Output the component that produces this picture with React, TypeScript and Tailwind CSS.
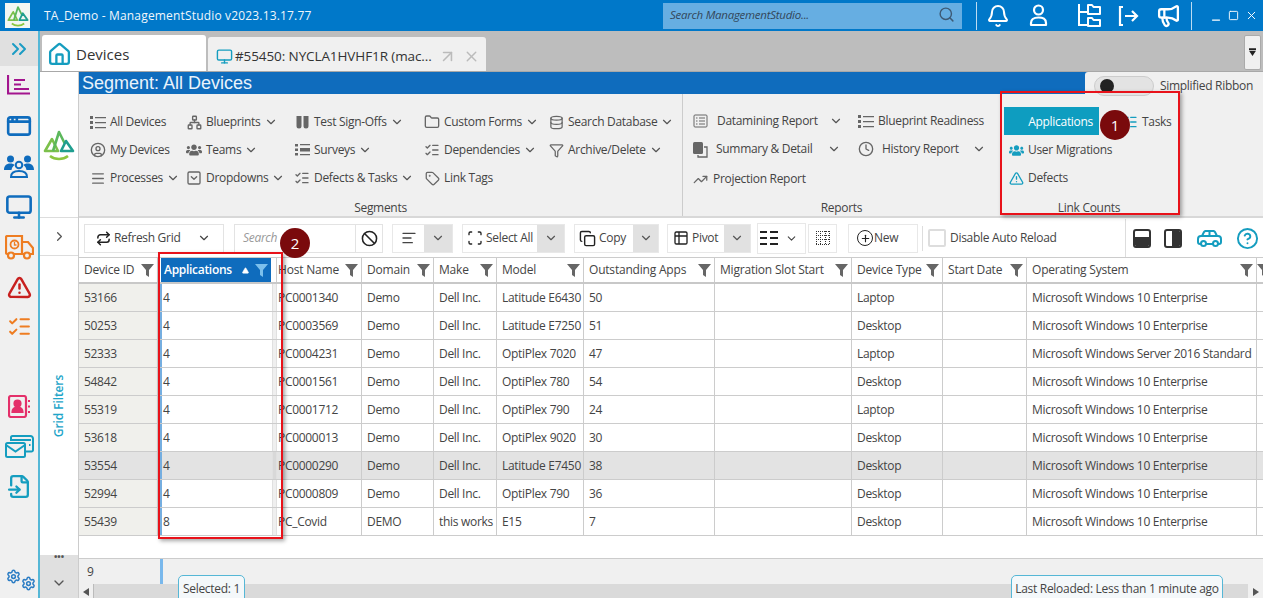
import React from "react";
import {
  Bell, Search, ChevronsRight, ChevronRight, ChevronDown, Home, Monitor, ArrowUpRight, X,
  CircleUser, Menu, Network, SquareChevronDown, ListChecks, Tag, Database, Funnel, Folder, Clock,
  TrendingUp, TriangleAlert, AppWindow, Repeat, Ban, AlignLeft, Scan, Copy, Table2, Plus, CircleHelp, Minus, Square, FileInput, Settings, Megaphone, Triangle
} from "lucide-react";
import { FaUsers } from "react-icons/fa";

const font = "font-['Open_Sans','Noto_Sans',sans-serif]";

function DotList({ size = 16 }: { size?: number }) {
  return (
    <svg width={size} height={size} viewBox="0 0 16 16" fill="#666">
      <path d="M0 2h3v3H0zM5 3h11v1.300H5zM0 7h3v3H0zM5 8h11v1.300H5zM0 12h3v3H0zM5 13h11v1.300H5z" />
    </svg>
  );
}
function Tubes() {
  return (
    <svg width="15" height="15" viewBox="0 0 15 15" fill="#666">
      <path d="M1.500 1h5v10a2.500 2.500 0 0 1-5 0zM8.500 1h5v10a2.500 2.500 0 0 1-5 0z" />
    </svg>
  );
}
function Survey() {
  return (
    <svg width="15" height="14" viewBox="0 0 15 14" fill="#666">
      <path d="M0 1h3v2.500H0zM5 1h10v1.200H5zM0 5.500h3V8H0zM5 5h10v3.500H5zM0 10h3v2.500H0zM5 11h10v1.200H5z" />
    </svg>
  );
}
function Datamining() {
  return (
    <svg width="15" height="14" viewBox="0 0 15 14" fill="none" stroke="#666">
      <rect x="1" y="1" width="13" height="12" rx="1" />
      <path d="M3 4h1.500M6 4h6M3 7h1.500M6 7h6M3 10h1.500M6 10h6" />
    </svg>
  );
}
function Summary() {
  return (
    <svg width="16" height="17" viewBox="0 0 16 17">
      <rect x="1" y="1" width="10" height="12" rx="1.500" fill="#666" />
      <path d="M12 6h3v10H6v-2" fill="none" stroke="#666" strokeWidth="1.300" />
    </svg>
  );
}

function Item({ icon, label, caret, gap = 4, caretGap = 3, className = "" }: { icon: React.ReactNode; label: string; caret?: boolean; gap?: number; caretGap?: number; className?: string }) {
  return (
    <div className={`flex h-[28px] items-center whitespace-nowrap text-[12px] tracking-[-0.3px] text-[#444] ${className}`}>
      <span className="flex w-[16px] shrink-0 justify-center text-[#666]" style={{ marginRight: gap }}>{icon}</span>
      <span>{label}</span>
      {caret && <span style={{ marginLeft: caretGap }}><ChevronDown size={14} className="text-[#555]" /></span>}
    </div>
  );
}

function HeadFilter({ white }: { white?: boolean }) {
  return (
    <svg width="13" height="14" viewBox="0 0 13 14" className="shrink-0">
      <path d="M0 1h13L8 7v7L5 12V7z" fill={white ? "#7cc0ec" : "#666"} />
    </svg>
  );
}

function RailIcon({ children, className = "" }: { children: React.ReactNode; className?: string }) {
  return <div className={`flex h-[40px] items-center justify-center ${className}`}>{children}</div>;
}

const cols = ["Device ID", "Applications", "Host Name", "Domain", "Make", "Model", "Outstanding Apps", "Migration Slot Start", "Device Type", "Start Date", "Operating System"];
const W10 = "Microsoft Windows 10 Enterprise";
const rows = [
  ["53166", "4", "PC0001340", "Demo", "Dell Inc.", "Latitude E6430", "50", "", "Laptop", "", W10],
  ["50253", "4", "PC0003569", "Demo", "Dell Inc.", "Latitude E7250", "51", "", "Desktop", "", W10],
  ["52333", "4", "PC0004231", "Demo", "Dell Inc.", "OptiPlex 7020", "47", "", "Laptop", "", "Microsoft Windows Server 2016 Standard"],
  ["54842", "4", "PC0001561", "Demo", "Dell Inc.", "OptiPlex 780", "54", "", "Desktop", "", W10],
  ["55319", "4", "PC0001712", "Demo", "Dell Inc.", "OptiPlex 790", "24", "", "Laptop", "", W10],
  ["53618", "4", "PC0000013", "Demo", "Dell Inc.", "OptiPlex 9020", "30", "", "Desktop", "", W10],
  ["53554", "4", "PC0000290", "Demo", "Dell Inc.", "Latitude E7450", "38", "", "Desktop", "", W10],
  ["52994", "4", "PC0000809", "Demo", "Dell Inc.", "OptiPlex 790", "36", "", "Desktop", "", W10],
  ["55439", "8", "PC_Covid", "DEMO", "this works", "E15", "7", "", "Desktop", "", W10],
];
const gridCols = "grid grid-cols-[79px_119px_85px_72px_63px_87px_131px_137px_91px_84px_230px_6px]";

function Logo({ size }: { size: number }) {
  return (
    <svg width={size} height={size} viewBox="0 0 32 32" fill="none" strokeLinejoin="round">
      <path d="M2 22 9 10l6 12z" stroke="#7cc04b" strokeWidth="2.600" />
      <path d="M10 22 16 3l6 12" stroke="#5cb85c" strokeWidth="2.600" />
      <path d="M18 22l5-10 7 10z" stroke="#1f9e8f" strokeWidth="2.600" />
      <path d="M7 27c5 4 13 4 18 0" stroke="#8cc63f" strokeWidth="2.600" />
    </svg>
  );
}

function Toggle({ className }: { className: string }) {
  return (
    <div className={`flex items-center justify-center bg-[#e1e1e1] ${className}`}>
      <ChevronDown size={14} className="text-[#555]" />
    </div>
  );
}

export default function App() {
  return (
    <div className={`relative flex h-[598px] w-[1263px] flex-col overflow-hidden bg-white ${font}`}>
      {/* title bar */}
      <div className="flex h-[31px] shrink-0 items-center bg-[#0078c9] text-white">
        <div className="ml-[5px] flex h-[25px] w-[25px] items-center justify-center bg-[#f3f7f3]"><Logo size={22} /></div>
        <span className="ml-[14px] w-[268px] whitespace-nowrap text-[12px] tracking-[0.17px] text-[#f0f6fb]">TA_Demo - ManagementStudio v2023.13.17.77</span>
        <div className="ml-[351px] flex h-[26px] w-[299px] items-center justify-between bg-[#66aee2] px-[7px] pb-[2px]">
          <span className="text-[11.5px] italic tracking-[-0.25px] text-[#33475a]">Search ManagementStudio...</span>
          <Search size={17} className="text-[#3d5a75]" />
        </div>
        <div className="ml-[14px] h-[28px] w-px bg-[#bcdcf2]" />
        <Bell size={24} className="ml-[9px]" strokeWidth={2} />
        <svg width="25" height="25" viewBox="0 0 25 25" fill="none" stroke="white" strokeWidth="2.200" className="ml-[16px]">
          <circle cx="12.500" cy="7" r="4.500" />
          <path d="M5 22v-2c0-4 3-5.500 7.500-5.500S20 16 20 20v2z" strokeLinejoin="round" />
        </svg>
        <svg width="25" height="25" viewBox="0 0 25 25" fill="none" stroke="white" strokeWidth="2" className="ml-[25px]">
          <path d="M3 1v21h8M3 9h8" />
          <path d="M12 2h4l1.500 2H24v7H12zM12 15h4l1.500 2H24v6H12z" strokeLinejoin="round" />
        </svg>
        <svg width="24" height="24" viewBox="0 0 24 24" fill="none" stroke="white" strokeWidth="2.200" className="ml-[15px]">
          <path d="M7 3H4v18h3M9 12h12M16 7l5 5-5 5" />
        </svg>
        <Megaphone size={25} className="ml-[16px]" strokeWidth={2.2} />
        <div className="ml-[10px] h-[28px] w-px bg-[#bcdcf2]" />
        <Minus size={12} className="ml-[18px] mt-[8px]" strokeWidth={2.5} />
        <Square size={11} className="ml-[6px]" strokeWidth={2} />
        <X size={13} className="ml-[6px]" strokeWidth={1.8} />
      </div>

      <div className="flex min-h-0 flex-1">
        {/* left rail */}
        <div className="flex w-[40px] shrink-0 flex-col border-r-2 border-[#55b7d6] bg-[#f0f0f0]">
          <div className="flex h-[35px] items-center justify-center bg-[#e0e0e0] text-[#1c9cc4]"><ChevronsRight size={24} strokeWidth={2} /></div>
          <RailIcon className="-mt-[1px]">
            <svg width="24" height="20" viewBox="0 0 24 20" fill="none" stroke="#a3158e" strokeWidth="2.200"><path d="M1 0v18.500h22M7 5h11M7 9.500h7M7 14h15" /></svg>
          </RailIcon>
          <RailIcon className="mt-[1px]"><AppWindow size={26} className="text-[#0f6cbd]" strokeWidth={2.4} /></RailIcon>
          <RailIcon>
            <svg width="30" height="24" viewBox="0 0 30 24" fill="#0f6cbd">
              <circle cx="6.500" cy="5" r="3.500" /><circle cx="23.500" cy="5" r="3.500" />
              <path d="M0 16c0-4 2-6.500 6.500-6.500 2 0 3 .5 4 1.500-2 1.500-2.500 3-3 5zM30 16c0-4-2-6.500-6.500-6.500-2 0-3 .5-4 1.500 2 1.500 2.500 3 3 5z" />
              <circle cx="15" cy="11" r="3.300" fill="none" stroke="#0f6cbd" strokeWidth="2" />
              <path d="M7 23c0-4 3-6 8-6s8 2 8 6z" fill="none" stroke="#0f6cbd" strokeWidth="2" />
            </svg>
          </RailIcon>
          <RailIcon className="mt-[1px]"><Monitor size={28} className="text-[#0f6cbd]" strokeWidth={2.2} /></RailIcon>
          <RailIcon>
            <svg width="29" height="25" viewBox="0 0 29 25" fill="none" stroke="#ee7d22" strokeWidth="2.200">
              <path d="M3 19H2.500A1.500 1.500 0 0 1 1 17.500V2.500A1.500 1.500 0 0 1 2.500 1H17v18H9" />
              <path d="M17 7h6l5 6v6h-3M17 19h2" />
              <circle cx="9.500" cy="9.500" r="4" strokeWidth="1.800" />
              <path d="M9.500 7v3h2" strokeWidth="1.300" />
              <circle cx="6" cy="20.500" r="3" /><circle cx="22" cy="20.500" r="3" />
            </svg>
          </RailIcon>
          <RailIcon><TriangleAlert size={25} className="text-[#c8201f]" strokeWidth={2.4} /></RailIcon>
          <RailIcon className="-mt-[1px]"><ListChecks size={25} className="text-[#ee7d22]" strokeWidth={2} /></RailIcon>
          <RailIcon className="mt-[40px]">
            <svg width="23" height="23" viewBox="0 0 23 23" fill="none" stroke="#e4306a" strokeWidth="2.200">
              <rect x="1" y="1" width="17" height="21" rx="2" />
              <circle cx="9.500" cy="8.500" r="3" fill="#e4306a" />
              <path d="M4.500 17c0-3 2-4.500 5-4.500s5 1.500 5 4.500z" fill="#e4306a" />
              <path d="M21 5v2M21 10.500v2M21 16v2" strokeWidth="2" />
            </svg>
          </RailIcon>
          <RailIcon>
            <svg width="29" height="23" viewBox="0 0 29 23" fill="none" stroke="#159dbf" strokeWidth="2">
              <path d="M6 6V2.500A1.500 1.500 0 0 1 7.500 1h18A2.500 2.500 0 0 1 28 3.500V15a1.500 1.500 0 0 1-1.500 1.500H21" />
              <path d="M7 5h19" />
              <rect x="1" y="8" width="19" height="14" rx="1.500" />
              <path d="M1 10l9.500 6.500L20 10" />
              <path d="M24 10h1.500" />
            </svg>
          </RailIcon>
          <RailIcon><FileInput size={25} className="text-[#159dbf]" strokeWidth={2.2} /></RailIcon>
          <div className="mt-auto mb-[2px] ml-[4px] flex h-[34px] items-center justify-center gap-0 text-[#2c7dc4]">
            <Settings size={15} className="-mt-[6px]" strokeWidth={2.4} />
            <Settings size={15} className="mt-[9px]" strokeWidth={2.4} />
          </div>
        </div>

        {/* main */}
        <div className="flex min-w-0 flex-1 flex-col">
          {/* tabs */}
          <div className="relative flex h-[41px] shrink-0 items-end border-b border-[#a8a8a8] bg-[#bdbdbd] pl-[2px]">
            <div className="flex h-[36px] w-[164px] items-center rounded-t-[3px] bg-white pt-[2px] pl-[5px]">
              <Home size={25} className="text-[#159dbf]" strokeWidth={2.2} />
              <span className="ml-[4px] text-[15px] text-[#333]">Devices</span>
            </div>
            <div className="ml-[2px] flex h-[34px] w-[278px] items-center rounded-t-[3px] bg-[#f0f0f0] pl-[8px] pt-[4px] text-[#333]">
              <Monitor size={17} className="text-[#159dbf]" strokeWidth={2} />
              <span className="ml-[2px] text-[13.5px] tracking-[-0.1px]">#55450: NYCLA1HVHF1R (mac...</span>
              <ArrowUpRight size={19} className="ml-[6px] text-[#bbb]" />
              <X size={17} className="ml-[6px] text-[#bbb]" />
            </div>
            <div className="absolute right-[2px] top-[4px] flex h-[35px] w-[17px] items-center justify-center rounded-[2px] border border-[#aaa] bg-[#f0f0f0]">
              <svg width="7" height="9" viewBox="0 0 8 10"><path d="M0 0h8v2H0zM0 3h8L4 9z" fill="#222" /></svg>
            </div>
          </div>

          <div className="flex min-h-0 flex-1">
            {/* side column */}
            <div className="flex w-[38px] shrink-0 flex-col">
              <div className="flex h-[146px] items-center justify-center border-b border-[#ddd] bg-white"><Logo size={32} /></div>
              <div className="flex h-[38px] items-center justify-center border-b border-[#ddd] bg-white text-[#555]"><ChevronRight size={15} /></div>
              <div className="flex h-[299px] items-center justify-center bg-white">
                <span className="-rotate-90 whitespace-nowrap text-[12px] font-semibold tracking-[-0.1px] text-[#1ea5c9]">Grid Filters</span>
              </div>
              <div className="flex h-[43px] flex-col items-center bg-[#e0e0e0] text-[#555]">
                <span className="h-[5px] text-[9px] font-bold leading-[3px] tracking-[0px]">•••</span>
                <ChevronDown size={16} className="mt-[15px]" />
              </div>
            </div>

            <div className="flex min-w-0 flex-1 flex-col border-l border-[#ccc]">
              {/* segment bar */}
              <div className="h-[22px] shrink-0 bg-[#0f6cbd] pl-[3px] font-['Liberation_Sans',sans-serif] text-[18px] leading-[22px] text-[#e9f3fb]">Segment: All Devices</div>

              {/* ribbon */}
              <div className="flex h-[124px] shrink-0 border-b-2 border-[#d8d8d8] bg-[#f0f0f0]">
                <div className="flex w-[604px] shrink-0 flex-col border-r border-[#ccc]">
                  <div className="flex flex-1 pl-[11px] pt-[14px]">
                    <div className="w-[96px]">
                      <Item icon={<DotList />} label="All Devices" />
                      <Item icon={<CircleUser size={16} />} label="My Devices" />
                      <Item icon={<Menu size={17} />} label="Processes" caret />
                    </div>
                    <div className="w-[108px]">
                      <Item icon={<Network size={15} strokeWidth={2.2} />} label="Blueprints" caret />
                      <Item icon={<FaUsers size={16} />} label="Teams" caret />
                      <Item icon={<SquareChevronDown size={16} />} label="Dropdowns" caret />
                    </div>
                    <div className="w-[130px]">
                      <Item icon={<Tubes />} label="Test Sign-Offs" caret />
                      <Item icon={<Survey />} label="Surveys" caret />
                      <Item icon={<ListChecks size={16} />} label="Defects & Tasks" caret />
                    </div>
                    <div className="w-[124px]">
                      <Item icon={<Folder size={16} />} label="Custom Forms" caret />
                      <Item icon={<ListChecks size={16} />} label="Dependencies" caret />
                      <Item icon={<Tag size={15} />} label="Link Tags" />
                    </div>
                    <div>
                      <Item icon={<Database size={15} />} label="Search Database" caret />
                      <Item icon={<Funnel size={15} />} label="Archive/Delete" caret />
                    </div>
                  </div>
                  <div className="h-[14px] text-center text-[12px] leading-[12px] tracking-[-0.3px] text-[#444]">Segments</div>
                </div>

                <div className="flex w-[317px] shrink-0 flex-col">
                  <div className="flex flex-1 pl-[9px] pt-[13px]">
                    <div className="w-[166px]">
                      <Item icon={<Datamining />} label="Datamining Report" gap={9} caret caretGap={11} />
                      <Item icon={<Summary />} label="Summary & Detail" gap={8} caret caretGap={15} />
                      <Item icon={<TrendingUp size={15} />} label="Projection Report" gap={5} className="mt-[2px]" />
                    </div>
                    <div>
                      <Item icon={<DotList />} label="Blueprint Readiness" />
                      <Item icon={<Clock size={16} />} label="History Report" gap={8} caret caretGap={13} />
                    </div>
                  </div>
                  <div className="h-[14px] text-center text-[12px] leading-[12px] tracking-[-0.3px] text-[#444]">Reports</div>
                </div>

                <div className="flex w-[178px] shrink-0 flex-col">
                  <div className="flex-1 pl-[4px] pt-[13px]">
                    <div className="flex h-[28px]">
                      <div className="flex h-[28px] w-[95px] items-center justify-end bg-[#0e9dc0] pr-[6px] pt-[1px] text-[12px] tracking-[-0.3px] text-white">Applications</div>
                      <Item icon={<ListChecks size={16} className="text-[#159dbf]" />} label="Tasks" className="ml-[23px] mt-[1px]" />
                    </div>
                    <Item icon={<FaUsers size={15} className="text-[#159dbf]" />} label="User Migrations" className="ml-[4px] mt-[1px]" />
                    <Item icon={<TriangleAlert size={15} className="text-[#159dbf]" strokeWidth={2.2} />} label="Defects" className="ml-[4px]" />
                  </div>
                  <div className="h-[14px] text-center text-[12px] leading-[12px] tracking-[-0.3px] text-[#444]">Link Counts</div>
                </div>
              </div>

              {/* toolbar */}
              <div className="flex h-[40px] shrink-0 items-center border-b border-[#ccc] bg-white pt-[1px] text-[12px] tracking-[-0.3px] text-[#444]">
                <div className="ml-[5px] flex h-[29px] w-[140px] items-center border border-[#e3e3e3] pl-[11px]">
                  <Repeat size={15} className="text-[#222]" strokeWidth={2.4} />
                  <span className="ml-[3px]">Refresh Grid</span>
                  <ChevronDown size={14} className="ml-auto mr-[12px]" />
                </div>
                <div className="ml-[10px] flex h-[29px] w-[149px] items-center border border-[#e3e3e3]">
                  <span className="w-[120px] pl-[8px] italic text-[#999]">Search</span>
                  <div className="flex h-full flex-1 items-center justify-center border-l border-[#e3e3e3]"><Ban size={17} className="text-[#222]" strokeWidth={2.2} /></div>
                </div>
                <div className="ml-[9px] flex h-[29px] w-[61px] border border-[#e8e8e8]">
                  <div className="flex w-[31px] items-center justify-center"><AlignLeft size={16} /></div>
                  <Toggle className="flex-1" />
                </div>
                <div className="ml-[9px] flex h-[29px] w-[103px] items-center border border-[#e8e8e8] pl-[4px]">
                  <Scan size={16} className="text-[#222]" />
                  <span className="ml-[3px]">Select All</span>
                  <Toggle className="ml-auto h-full w-[27px]" />
                </div>
                <div className="ml-[9px] flex h-[29px] w-[85px] items-center border border-[#e8e8e8] pl-[4px]">
                  <Copy size={17} className="text-[#222]" />
                  <span className="ml-[3px]">Copy</span>
                  <Toggle className="ml-auto h-full w-[25px]" />
                </div>
                <div className="ml-[8px] flex h-[29px] w-[84px] items-center border border-[#e8e8e8] pl-[5px]">
                  <Table2 size={16} className="text-[#222]" />
                  <span className="ml-[3px]">Pivot</span>
                  <Toggle className="ml-auto h-full w-[26px]" />
                </div>
                <div className="ml-[6px] flex h-[31px] w-[49px] items-center border border-[#e8e8e8] pl-[2px]">
                  <svg width="18" height="16" viewBox="0 0 18 16" fill="#222"><path d="M0 1h7v2H0zM10 1h8v2h-8zM0 7h7v2H0zM10 7h8v2h-8zM0 13h7v2H0zM10 13h8v2h-8z" /></svg>
                  <ChevronDown size={13} className="ml-[7px]" />
                </div>
                <div className="ml-[2px] flex h-[29px] w-[29px] items-center justify-center border border-[#e8e8e8]">
                  <svg width="16" height="16" viewBox="0 0 16 16" fill="none" stroke="#333" strokeDasharray="1 1"><path d="M1 1.500h14M1 5.500h14M1 9.500h14M1 14.500h14M1.500 1v14M5.500 1v14M10.500 1v14M14.500 1v14" /></svg>
                </div>
                <div className="ml-[11px] flex h-[29px] w-[70px] items-center border border-[#e8e8e8] pl-[8px]">
                  <div className="flex h-[16px] w-[16px] items-center justify-center rounded-full border-[1.5px] border-[#222]"><Plus size={11} strokeWidth={2.5} className="text-[#222]" /></div>
                  <span className="ml-[1px]">New</span>
                </div>
                <div className="ml-[4px] h-[25px] w-px bg-[#ddd]" />
                <div className="ml-[5px] h-[18px] w-[18px] rounded-[2px] border-2 border-[#ddd]" />
                <span className="ml-[4px]">Disable Auto Reload</span>
                <div className="ml-[68px] h-[38px] w-px self-start bg-[#ddd]" />
                <div className="ml-[7px] flex h-[19px] w-[18px] flex-col overflow-hidden rounded-[3px] border-2 border-[#333]"><div className="h-[6px]" /><div className="flex-1 bg-[#333]" /></div>
                <div className="ml-[13px] flex h-[19px] w-[18px] justify-end overflow-hidden rounded-[3px] border-2 border-[#333]"><div className="w-[8px] bg-[#333]" /></div>
                <svg width="25" height="17" viewBox="0 0 25 17" fill="none" stroke="#159dbf" strokeWidth="2" className="ml-[15px]">
                  <path d="M5 6l2-4a2 2 0 0 1 2-1h7a2 2 0 0 1 2 1l2 4" />
                  <path d="M4 14H3a2 2 0 0 1-2-2V9a3 3 0 0 1 3-3h17a3 3 0 0 1 3 3v3a2 2 0 0 1-2 2h-1M9 14h7M12.500 1v5" />
                  <circle cx="6.500" cy="13.500" r="2.500" /><circle cx="18.500" cy="13.500" r="2.500" />
                </svg>
                <CircleHelp size={23} className="ml-[14px] text-[#159dbf]" strokeWidth={2} />
              </div>

              {/* grid */}
              <div className="flex min-h-0 flex-1 flex-col bg-white text-[12px] tracking-[-0.3px] text-[#444]">
                <div className={`${gridCols} h-[26px] shrink-0 border-b-2 border-[#c8c8c8]`}>
                  {cols.map((c, i) => {
                    if (i === 1) {
                      return (
                        <div key={c} className="flex h-full border-r border-[#ccc] pl-[3px] pr-[5px]">
                          <div className="flex h-full flex-1 items-center bg-[#0f6cbd] pl-[3px] pr-[3px] text-white">
                            <span className="font-semibold">{c}</span>
                            <Triangle size={7} fill="white" className="ml-auto mr-[6px] text-white" />
                            <HeadFilter white />
                          </div>
                        </div>
                      );
                    }
                    return (
                      <div key={c} className={`flex h-full items-center justify-between overflow-hidden border-r border-[#ccc] pr-[3px] font-medium tracking-[-0.2px] ${i === 2 ? "pl-[1px]" : "pl-[5px]"}`}>
                        <span className="whitespace-nowrap">{c}</span>
                        <HeadFilter />
                      </div>
                    );
                  })}
                  <div className="flex items-center overflow-hidden"><HeadFilter /></div>
                </div>
                {rows.map((r) => {
                  const sel = r[0] === "53554";
                  return (
                    <div key={r[0]} className={`${gridCols} h-[28px] shrink-0 border-b border-[#ccc] ${sel ? "bg-[#e3e3e3]" : ""}`}>
                      {r.map((v, i) => {
                        if (i === 1) {
                          return (
                            <div key={i} className="flex h-full">
                              <div className="h-full w-[4px] bg-[#75aee0]" />
                              <div className="flex flex-1 items-center pl-[1px]">{v}</div>
                              <div className={`h-full w-[5px] border-x border-[#e0e0e0] ${sel ? "bg-[#d8d8d8]" : "bg-[#efefef]"}`} />
                            </div>
                          );
                        }
                        return (
                          <div key={i} className={`flex h-full items-center overflow-hidden whitespace-nowrap border-r border-[#ccc] ${i === 2 ? "pl-[1px]" : "pl-[5px]"} ${i === 0 ? (sel ? "bg-[#e3e3e3]" : "bg-[#f0f0ec]") : ""}`}>{v}</div>
                        );
                      })}
                      <div />
                    </div>
                  );
                })}
                <div className="h-[23px] shrink-0 border-b border-[#ccc]" />
                <div className="flex h-[25px] shrink-0 items-center bg-[#f0f0f0]">
                  <span className="ml-[8px] w-[73px]">9</span>
                  <div className="h-full w-[3px] bg-[#79b8ec]" />
                </div>
                <div className="flex h-[15px] shrink-0 items-center justify-between bg-[#dadada]">
                  <div className="flex h-full w-[15px] items-center justify-center border-r border-[#bbb] bg-[#f0f0f0]">
                    <svg width="6" height="8"><path d="M6 0v8L0 4z" fill="#555" /></svg>
                  </div>
                  <div className="flex h-full w-[15px] items-center justify-center bg-[#f0f0f0]">
                    <svg width="6" height="8"><path d="M0 0v8l6-4z" fill="#555" /></svg>
                  </div>
                </div>
              </div>
            </div>
          </div>
        </div>
      </div>

      {/* overlays */}
      <div className="absolute left-[1085px] top-[72px] flex h-[28px] w-[178px] items-center rounded-tl-[3px] bg-[#f0f0f0] pl-[9px] text-[12px] tracking-[-0.3px] text-[#444]">
        <div className="flex h-[20px] w-[60px] items-center rounded-full border border-[#ccc] bg-[#e3e3e3] pl-[5px]"><div className="h-[14px] w-[14px] rounded-full bg-[#222]" /></div>
        <span className="ml-[6px]">Simplified Ribbon</span>
      </div>
      <div className="absolute left-[1000px] top-[91px] h-[124px] w-[180px] border-2 border-[#e8121a] shadow-[2px_2px_4px_rgba(0,0,0,0.35)]" />
      <div className="absolute left-[158px] top-[252px] h-[287px] w-[125px] border-2 border-[#e8121a] shadow-[2px_2px_4px_rgba(0,0,0,0.35)]" />
      <div className="absolute left-[1100px] top-[110px] flex h-[30px] w-[30px] items-center justify-center rounded-full bg-[#7a0a0c] text-[15px] text-white">1</div>
      <div className="absolute left-[280px] top-[228px] flex h-[30px] w-[30px] items-center justify-center rounded-full bg-[#7a0a0c] text-[15px] text-white">2</div>
      <div className="absolute left-[178px] top-[575px] flex h-[24px] w-[67px] items-center justify-center rounded-t-[5px] border border-[#55b7d6] bg-[#f4f8fa] pt-[3px] text-[12px] tracking-[-0.3px] text-[#444]">Selected: 1</div>
      <div className="absolute left-[1011px] top-[575px] flex h-[24px] w-[212px] items-center justify-center rounded-t-[5px] border border-[#55b7d6] bg-[#f4f8fa] pt-[3px] text-[12px] tracking-[-0.3px] text-[#444]">Last Reloaded: Less than 1 minute ago</div>
    </div>
  );
}
